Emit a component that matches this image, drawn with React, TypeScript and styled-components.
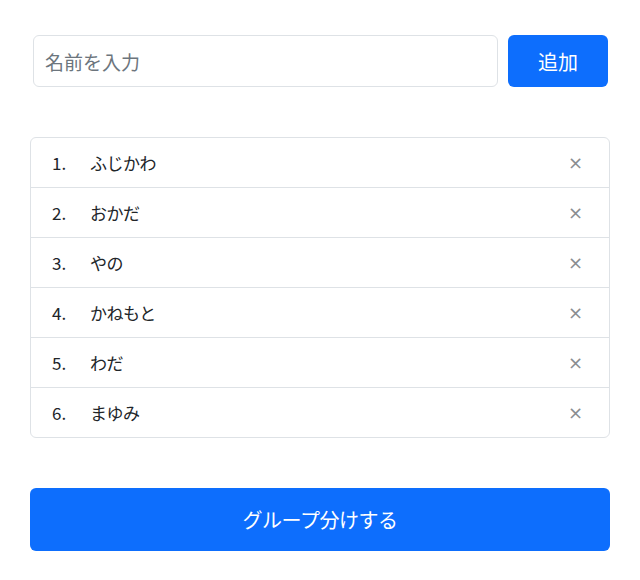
import { useState } from 'react';
import styled, { createGlobalStyle } from 'styled-components';

const GlobalStyle = createGlobalStyle`
  body {
    margin: 0;
    background: #ffffff;
    font-family: "Noto Sans CJK JP", "Noto Sans", sans-serif;
    color: #212529;
  }
`;

const initialNames = ['ふじかわ', 'おかだ', 'やの', 'かねもと', 'わだ', 'まゆみ'];

export default function App() {
  const [names, setNames] = useState(initialNames);
  const [value, setValue] = useState('');

  const handleAdd = () => {
    if (!value.trim()) return;
    setNames([...names, value.trim()]);
    setValue('');
  };

  const handleDelete = (index: number) =>
    setNames(names.filter((_, i) => i !== index));

  return (
    <>
      <GlobalStyle />
      <Page>
        <InputRow>
          <NameInput
            placeholder="名前を入力"
            value={value}
            onChange={(e) => setValue(e.target.value)}
          />
          <AddButton onClick={handleAdd}>追加</AddButton>
        </InputRow>

        <NameList>
          {names.map((name, index) => (
            <NameItem key={index}>
              <Number>{index + 1}.</Number>
              <Name>{name}</Name>
              <DeleteButton onClick={() => handleDelete(index)}>×</DeleteButton>
            </NameItem>
          ))}
        </NameList>

        <GroupButton>グループ分けする</GroupButton>
      </Page>
    </>
  );
}

const Page = styled.div`
  width: 580px;
  padding: 35px 30px 30px;
  display: flex;
  flex-direction: column;
  gap: 50px;
`;

const InputRow = styled.div`
  display: flex;
  gap: 10px;
  padding: 0 2px 0 3px;
`;

const NameInput = styled.input`
  flex: 1;
  height: 52px;
  box-sizing: border-box;
  padding: 0 11px;
  border: 1px solid #dee2e6;
  border-radius: 6px;
  font-family: inherit;
  font-size: 19px;
  color: #212529;
  outline: none;

  &::placeholder {
    color: #6c757d;
  }
`;

const AddButton = styled.button`
  width: 100px;
  height: 52px;
  border: none;
  border-radius: 6px;
  background: #0d6efd;
  color: #ffffff;
  font-family: inherit;
  font-size: 20px;
  cursor: pointer;
`;

const NameList = styled.ul`
  list-style: none;
  margin: 0;
  padding: 0;
  border: 1px solid #dee2e6;
  border-radius: 6px;
`;

const NameItem = styled.li`
  box-sizing: border-box;
  height: 49px;
  display: flex;
  align-items: center;
  padding: 0 26px 0 21px;
  font-size: 17px;
  letter-spacing: -0.5px;

  & + & {
    height: 50px;
    border-top: 1px solid #dee2e6;
  }
`;

const Number = styled.span`
  width: 38px;
  letter-spacing: 0;
`;

const Name = styled.span`
  flex: 1;
`;

const DeleteButton = styled.button`
  border: none;
  background: none;
  padding: 0;
  color: #8a8d91;
  font-family: "DejaVu Sans", sans-serif;
  font-size: 18px;
  cursor: pointer;
`;

const GroupButton = styled.button`
  height: 63px;
  border: none;
  border-radius: 6px;
  background: #0d6efd;
  color: #ffffff;
  font-family: inherit;
  font-size: 20px;
  letter-spacing: -0.5px;
  cursor: pointer;
`;
